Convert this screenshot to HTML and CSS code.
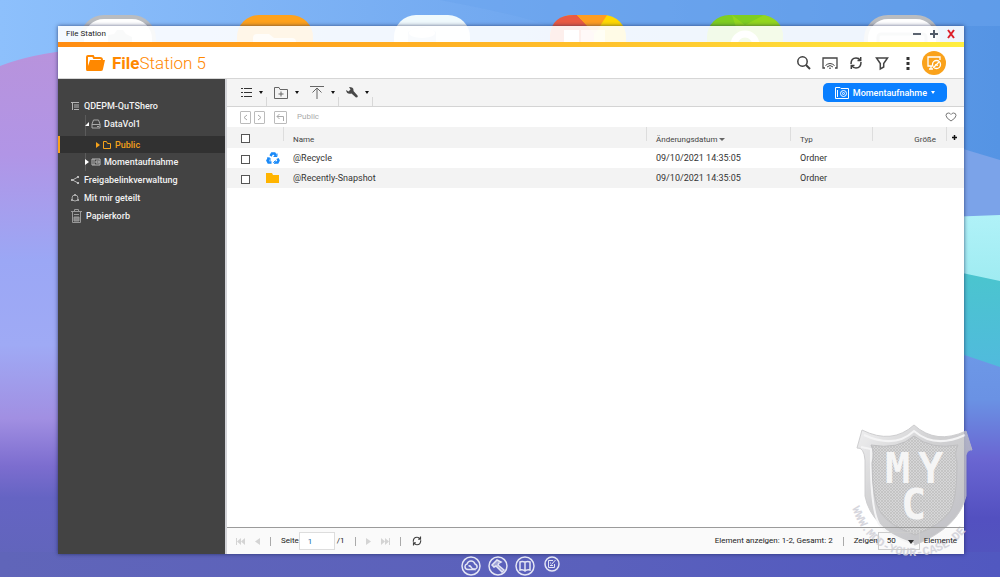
FILE: index.html
```html
<!DOCTYPE html>
<html lang="de">
<head>
<meta charset="utf-8">
<meta name="viewport" content="width=device-width, initial-scale=1">
<title>File Station</title>
<link rel="stylesheet" href="styles.css">
</head>
<body>
<svg class="wallpaper" viewBox="0 0 1000 577" preserveAspectRatio="none" aria-hidden="true">
  <defs>
    <linearGradient id="sky"><stop offset="0" stop-color="#8dc0fc"/><stop offset=".5" stop-color="#72a9f0"/><stop offset="1" stop-color="#5594e4"/></linearGradient>
    <linearGradient id="left" x1="0" y1="0" x2="0" y2="1"><stop offset="0" stop-color="#b893dc"/><stop offset=".2" stop-color="#b195e6"/><stop offset=".4" stop-color="#9ba7f5"/><stop offset=".56" stop-color="#9faaf5"/><stop offset=".7" stop-color="#a18fe2"/><stop offset=".79" stop-color="#7c6dcf"/><stop offset=".85" stop-color="#6564c3"/><stop offset="1" stop-color="#6065b9"/></linearGradient>
    <linearGradient id="right" x1="0" y1="0" x2="0" y2="1"><stop offset="0" stop-color="#6e9ae8"/><stop offset=".25" stop-color="#6a92e4"/><stop offset=".5" stop-color="#6a66d2"/><stop offset=".75" stop-color="#5350c0"/><stop offset="1" stop-color="#5157bd"/></linearGradient>
    <linearGradient id="mint" x1="0" y1="0" x2="0" y2="1"><stop offset="0" stop-color="#b0f2f8"/><stop offset="1" stop-color="#9beaf0"/></linearGradient>
    <linearGradient id="teal" x1="0" y1="0" x2="0" y2="1"><stop offset="0" stop-color="#4ac6cd"/><stop offset="1" stop-color="#52b8e0"/></linearGradient>
    <linearGradient id="floor"><stop offset="0" stop-color="#6065b9"/><stop offset=".6" stop-color="#5a60bc"/><stop offset="1" stop-color="#5158c0"/></linearGradient>
  </defs>
  <rect width="1000" height="577" fill="url(#sky)"/>
  <path d="M440 0Q520 15 550 26H1000V0Z" fill="#6aa4ee" opacity=".5"/>
  <path d="M0 66Q30 54 80 49V577H0Z" fill="url(#left)"/>
  <path d="M920 136L1000 160V577H920Z" fill="#7ba3e9"/>
  <path d="M920 218L1000 215V300H920Z" fill="url(#mint)"/>
  <path d="M920 264L1000 281V390H920Z" fill="url(#teal)"/>
  <path d="M920 340L1000 367V577H920Z" fill="url(#right)"/>
  <rect y="552" width="1000" height="25" fill="url(#floor)"/>
</svg>

<div class="apps" aria-hidden="true">
  <svg viewBox="0 0 76 40"><rect x="2" y="2" width="72" height="60" rx="22" fill="#fff" stroke="#b9bcc0" stroke-width="4"/><path d="M28 26V20l6-1 3-4h6l3 4 6 3v18H24Z" fill="#c3c7cc"/></svg>
  <svg viewBox="0 0 76 40"><rect width="76" height="60" rx="22" fill="#ffa21c"/><path d="M16 40V23q0-4 4-4h12l5 4h18q4 0 4 4v13Z" fill="#fff" opacity=".75"/></svg>
  <svg viewBox="0 0 76 40"><rect width="76" height="60" rx="22" fill="#f0fafd"/><path d="M14 40V17q14-9 28 0v23Z" fill="#bcd3ec"/><ellipse cx="28" cy="18" rx="13" ry="5" fill="#fff"/></svg>
  <svg viewBox="0 0 76 40"><rect width="76" height="60" rx="22" fill="#ffd800"/><path d="M0 40V20Q2 0 24 0h3l17 18v22Z" fill="#ea5a43"/><path d="M27 0h30L45 19Z" fill="#ff9d20"/><rect x="14" y="15" width="15" height="20" fill="#fff"/><rect x="31" y="15" width="24" height="20" fill="#fff" opacity=".6"/></svg>
  <svg viewBox="0 0 76 40"><rect width="76" height="60" rx="22" fill="#7fce21"/><path d="M25 0l13 10L57 0q18 4 19 20v20H38Z" fill="#9bdb1e" opacity=".7"/><circle cx="38" cy="30" r="11" fill="none" stroke="#fff" stroke-width="7"/></svg>
  <svg viewBox="0 0 76 40"><rect x="2" y="2" width="72" height="60" rx="22" fill="#fff" stroke="#b9bcc0" stroke-width="4"/><rect x="14" y="19" width="48" height="30" rx="3" fill="#eef0f4" stroke="#bfc5ce" stroke-width="3"/></svg>
</div>

<main class="window">
  <header class="titlebar">
    <span class="titlebar-name">File Station</span>
    <div class="window-buttons">
      <button type="button" aria-label="Minimieren"><svg width="10" height="10" viewBox="0 0 10 10"><path d="M1 5h8" stroke="#5c6470" stroke-width="2"/></svg></button>
      <button type="button" aria-label="Maximieren"><svg width="10" height="10" viewBox="0 0 10 10"><path d="M1 5h8M5 1v8" stroke="#525b68" stroke-width="2"/></svg></button>
      <button type="button" aria-label="Schließen"><svg width="10" height="10" viewBox="0 0 10 10"><path d="M2 1l6 8M8 1L2 9" stroke="#dc1f2c" stroke-width="2"/></svg></button>
    </div>
  </header>

  <div class="brandbar">
    <svg width="20" height="16" viewBox="0 0 20 16"><path d="M2 14V2q0-1 1-1h5l1 2h6q2 0 2 2v1" fill="none" stroke="#f80" stroke-width="2"/><path d="M5 5h15l-2 9q0 2-2 2H2Q1 16 1 14h1Z" fill="#f80"/></svg>
    <h1 class="brand"><b>File</b>Station 5</h1>
    <div class="brand-actions">
      <button type="button" aria-label="Suchen"><svg width="16" height="16" viewBox="0 0 16 16" fill="none" stroke="#3f3f3f"><circle cx="6.500" cy="6.500" r="4.700" stroke-width="1.500"/><path d="M10 10l4 4" stroke-width="2"/></svg></button>
      <button type="button" aria-label="Streamen"><svg width="16" height="16" viewBox="0 0 16 16" fill="none" stroke="#444"><path d="M3 13H1V3h14v10h-2" stroke-width="1.300"/><path d="M3.500 10.500q4.500-4 9 0M5 12q3-3 6 0M7 13.200h2" stroke-width="1"/></svg></button>
      <button type="button" aria-label="Aktualisieren"><svg width="16" height="16" viewBox="0 0 16 16" fill="none" stroke="#3f3f3f" stroke-width="1.500"><path d="M3 9q0-6 5-6 3 0 4 2M13 7q0 6-5 6-3 0-4-2M12.700 2v3.500H9.500M3.300 14v-3.500h3.200"/></svg></button>
      <button type="button" aria-label="Filter"><svg width="16" height="16" viewBox="0 0 16 16" fill="none" stroke="#444" stroke-width="1.500"><path d="M2.500 3h11L9.700 8.500V12l-3.400 2V8.500Z"/></svg></button>
      <button type="button" aria-label="Mehr"><svg width="16" height="16" viewBox="0 0 16 16" fill="#333"><path d="M6.500 2h3v3h-3zM6.500 7h3v3h-3zM6.500 12h3v3h-3z"/></svg></button>
      <button type="button" class="remote" aria-label="Remote-Bereitstellung"><svg width="16" height="16" viewBox="0 0 16 16" fill="none" stroke="#fff" stroke-width="1.300"><path d="M6 11H2V2h12v3M3 14h4M5 11v3"/><circle cx="10.500" cy="9.500" r="4"/><path d="M8 12l5-5M9 9.500l3 1"/></svg></button>
    </div>
  </div>

  <div class="body">
    <nav class="sidebar" aria-label="Ordner">
      <a href="#" class="node root"><svg width="8" height="8" viewBox="0 0 8 8" fill="none" stroke="#b5b5b5"><path d="M0 .5h8M3 3h5M3 5h5M3 7.500h5M1.500 0v8"/></svg>QDEPM-QuTShero</a>
      <div class="branch">
        <a href="#" class="node child"><svg class="arrow" width="4" height="4" viewBox="0 0 4 4"><path d="M4 0v4H0Z" fill="#fff"/></svg><svg width="10" height="10" viewBox="0 0 10 10" fill="none" stroke="#aaa"><path d="M1 5l1.500-4h5L9 5v4H1ZM1 5.500h8M6 7.500h2"/></svg>DataVol1</a>
        <a href="#" class="node selected" aria-current="true"><svg class="arrow" width="4" height="6" viewBox="0 0 4 6"><path d="M0 0l4 3-4 3Z" fill="#f5a21b"/></svg><svg width="10" height="10" viewBox="0 0 10 10" fill="none" stroke="#f5a21b"><path d="M1.500 1.500h3l1 2h3v5h-7Z"/></svg>Public</a>
        <a href="#" class="node child"><svg class="arrow" width="4" height="6" viewBox="0 0 4 6"><path d="M0 0l4 3-4 3Z" fill="#fff"/></svg><svg width="10" height="10" viewBox="0 0 10 10" fill="none" stroke="#bbb"><path d="M1 2h8v6H1ZM3 2v6M5 4h3v2H5Z"/></svg>Momentaufnahme</a>
      </div>
      <a href="#" class="node root"><svg width="8" height="8" viewBox="0 0 8 8" fill="none" stroke="#bbb"><path d="M7 1L1.500 4 7 7"/><path d="M6 1h2M0 4h2M6 7h2" stroke-width="2"/></svg>Freigabelinkverwaltung</a>
      <a href="#" class="node root"><svg width="8" height="8" viewBox="0 0 8 8" fill="none" stroke="#aaa"><circle cx="4" cy="4" r="3"/><path d="M3 1h2M0 6h2M6 6h2" stroke-width="2"/></svg>Mit mir geteilt</a>
      <a href="#" class="node trash"><svg width="11" height="14" viewBox="0 0 11 14" fill="none" stroke="#999"><path d="M0 2.500h11M3.500 2V.500h4V2M1.500 3v10.500h8V3M3 5.500h5"/><path d="M3 8h5v4H3Z" fill="#888"/></svg>Papierkorb</a>
    </nav>

    <section class="content">
      <div class="toolbar">
        <button type="button" class="tool ruled" aria-label="Ansicht"><svg width="12" height="12" viewBox="0 0 12 12" stroke="#333"><path d="M1 1.500h2M1 5.500h2M1 9.500h2M4 1.500h8M4 5.500h8M4 9.500h8"/></svg><i></i></button>
        <button type="button" class="tool" aria-label="Ordner erstellen"><svg width="14" height="12" viewBox="0 0 14 12" fill="none" stroke="#666"><path d="M.5.5H5l1 2h7.500v9H.5ZM7 4.500v5M4.500 7h5"/></svg><i></i></button>
        <button type="button" class="tool ruled" aria-label="Hochladen"><svg width="14" height="13" viewBox="0 0 14 13" fill="none" stroke="#666"><path d="M0 .5h14M7 13V2M2.500 6.500L7 2l4.500 4.500"/></svg><i></i></button>
        <button type="button" class="tool ruled" aria-label="Werkzeuge"><svg width="12" height="12" viewBox="0 0 12 12"><path d="M3 0q5 0 4.500 4L11.500 8.500q1 2-1.500 2L5.500 6.500Q1 8 0 3l2.500 1.500L4.500 2.500Z" fill="#484848"/></svg><i></i></button>
        <button type="button" class="snapshot"><svg width="14" height="12" viewBox="0 0 14 12" fill="none" stroke="#fff"><path d="M.5 11.500V.5H5l1 1h7.500v10ZM2.500 3v7"/><circle cx="8.500" cy="6.500" r="3"/><circle cx="8.500" cy="6.500" r="1"/></svg>Momentaufnahme<i></i></button>
      </div>

      <div class="crumbs">
        <button type="button" class="step" aria-label="Zurück"><svg width="9" height="11" viewBox="0 0 9 11"><path d="M6 3L3 5.500 6 8"/></svg></button>
        <button type="button" class="step" aria-label="Vor"><svg width="9" height="11" viewBox="0 0 9 11"><path d="M3 3l3 2.500L3 8"/></svg></button>
        <button type="button" class="step up" aria-label="Nach oben"><svg width="11" height="11" viewBox="0 0 11 11"><path d="M8.500 9V4.500H2M4.500 2L2 4.500 4.500 7"/></svg></button>
        <a href="#" class="crumb">Public</a>
        <button type="button" class="favorite" aria-label="Favorit"><svg width="12" height="10" viewBox="0 0 12 10"><path d="M6 9Q1 6 1 3.500 1 1 3.500 1 5 1 6 2.500 7 1 8.500 1 11 1 11 3.500 11 6 6 9Z" fill="none" stroke="#777"/></svg></button>
      </div>

      <div class="files">
        <table>
          <colgroup><col class="c-check"><col class="c-icon"><col><col class="c-date"><col class="c-type"><col class="c-size"><col class="c-add"></colgroup>
          <thead>
            <tr>
              <th><input type="checkbox" aria-label="Alle auswählen"></th><th></th>
              <th class="split">Name</th>
              <th class="split">Änderungsdatum <i></i></th>
              <th class="split">Typ</th>
              <th class="split size">Größe</th>
              <th class="split add"><button type="button" aria-label="Spalten"><svg width="5" height="5" viewBox="0 0 5 5"><path d="M0 2.500h5M2.500 0v5" stroke="#111" stroke-width="1.500"/></svg></button></th>
            </tr>
          </thead>
          <tbody>
            <tr>
              <td><input type="checkbox" aria-label="@Recycle auswählen"></td>
              <td><svg width="14" height="12" viewBox="0 0 14 12" fill="none" stroke="#1989f8" stroke-width="2.500"><path d="M4.500 4L6 1.500h2.500L10 4M11.500 6.500l1 2-1 2H8.500M5.500 10.500h-3l-1-2L3 6"/><path d="M7.500 4.500h3.500V1.500M9.500 8.500L7.500 10.500l2 1.500M1 6h3v3" stroke-width="1"/></svg></td>
              <td>@Recycle</td><td>09/10/2021 14:35:05</td><td>Ordner</td><td></td><td></td>
            </tr>
            <tr>
              <td><input type="checkbox" aria-label="@Recently-Snapshot auswählen"></td>
              <td><svg width="14" height="12" viewBox="0 0 14 12"><path d="M0 1h6l1 2h6v8H0Z" fill="#ffb400"/></svg></td>
              <td>@Recently-Snapshot</td><td>09/10/2021 14:35:05</td><td>Ordner</td><td></td><td></td>
            </tr>
          </tbody>
        </table>
      </div>

      <footer class="pager">
        <button type="button" class="nav" aria-label="Erste Seite"><svg width="9" height="7" viewBox="0 0 9 7"><path d="M0 0h1v7H0ZM5 0v7L1 3.500ZM9 0v7L5 3.500Z"/></svg></button>
        <button type="button" class="nav" aria-label="Vorherige Seite"><svg width="5" height="7" viewBox="0 0 5 7"><path d="M5 0v7L0 3.500Z"/></svg></button>
        <hr>
        <label for="page">Seite</label><input id="page" type="text" value="1"><span class="total">/1</span>
        <hr>
        <button type="button" class="nav" aria-label="Nächste Seite"><svg width="5" height="7" viewBox="0 0 5 7"><path d="M0 0v7l5-3.500Z"/></svg></button>
        <button type="button" class="nav" aria-label="Letzte Seite"><svg width="9" height="7" viewBox="0 0 9 7"><path d="M8 0h1v7H8ZM0 0v7l4-3.500ZM4 0v7l4-3.500Z"/></svg></button>
        <hr>
        <button type="button" aria-label="Neu laden"><svg width="12" height="12" viewBox="0 0 16 16" fill="none" stroke="#3f3f3f" stroke-width="1.500"><path d="M3 9q0-6 5-6 3 0 4 2M13 7q0 6-5 6-3 0-4-2M12.700 2v3.500H9.500M3.300 14v-3.500h3.200"/></svg></button>
        <span class="summary">Element anzeigen: 1-2, Gesamt: 2</span>
        <hr>
        <label for="count">Zeigen</label>
        <span class="select"><select id="count"><option>50</option></select></span>
        <span class="unit">Elemente</span>
      </footer>
    </section>
  </div>
</main>

<div class="dock">
  <button type="button" aria-label="Cloud"><svg width="20" height="20" viewBox="0 0 20 20"><circle cx="10" cy="10" r="9"/><path d="M15 13.500H7q-3 0-3-3 0-2 2-2.500Q7 5 10 5q3 0 4 3 2.500 1 2 3.500-1 2-3 1.500-2 0-3-2-1-1.500-2.500-1"/></svg></button>
  <button type="button" aria-label="Werkzeug"><svg width="20" height="20" viewBox="0 0 20 20"><circle cx="10" cy="10" r="9"/><path d="M4 9l5-5 4 2-2 1-1 2 6 5-2 2-6-6-2 1Z" fill="#e3e5f4" fill-opacity=".5"/></svg></button>
  <button type="button" aria-label="Hilfe"><svg width="20" height="20" viewBox="0 0 20 20"><circle cx="10" cy="10" r="9"/><path d="M10 6v9M10 6Q7 5 5 6v8q3-1 5 1 2-2 5-1V6q-2-1-5 0Z"/></svg></button>
  <button type="button" class="note" aria-label="Notiz"><svg width="16" height="16" viewBox="0 0 16 16"><circle cx="8" cy="8" r="7"/><path d="M9 4.500H4.500v7h6V8M7.500 8.500l4-4.500M6 7h1M6 9.500h3" stroke-width="1"/></svg></button>
</div>

<svg class="badge" width="140" height="140" viewBox="0 0 140 140" role="img" aria-label="MYC">
  <defs>
    <linearGradient id="metal" x1="0" y1="0" x2="1" y2="1"><stop offset="0" stop-color="#ededee"/><stop offset=".4" stop-color="#c7c7c9"/><stop offset="1" stop-color="#b1b1b7"/></linearGradient>
    <pattern id="mesh" width="3" height="3" patternUnits="userSpaceOnUse"><rect width="3" height="3" fill="#d0d0d1"/><path d="M0 0l3 3M3 0L0 3" stroke="#adadae" stroke-width=".6"/></pattern>
    <path id="ring" d="M3 88Q20 136 66 136 112 134 131 86"/>
  </defs>
  <path d="M13 10Q43 25 65 5 87 25 117 11L123 30Q119 29 117 35V76Q110 107 66 125 22 108 16 76V40Q15 27 8 28Z" fill="url(#metal)" stroke="#c4c4c6" opacity=".95"/>
  <path d="M15 15Q46 29 65 11 86 29 116 15M12 27l10 2q-1 58 8 75 8 11 35 20" fill="none" stroke="#f3f3f4" stroke-width="2"/>
  <path d="M22 25Q49 30 65 16 82 30 109 25 105 33 108 42 108 82 100 93 90 106 66 115 41 106 32 93 23 80 23 43 26 33 22 25Z" fill="url(#mesh)" stroke="#b4b4b6"/>
  <g class="badge-letters"><text x="36" y="63">M</text><text x="69" y="63">Y</text><text x="52" y="99">C</text></g>
  <text class="badge-ring"><textPath href="#ring">WWW.MOD-YOUR-CASE.DE</textPath></text>
</svg>
</body>
</html>
```
FILE: styles.css
```css
* { box-sizing: border-box; }

body {
  margin: 0;
  min-height: 100vh;
  display: flex;
  flex-direction: column;
  position: relative;
  overflow: hidden;
  background: #72a9f0;
  color: #333;
  font: 9px/12px Roboto, "Liberation Sans", sans-serif;
}

button {
  display: inline-flex;
  align-items: center;
  justify-content: center;
  padding: 0;
  border: 0;
  background: none;
  color: inherit;
  font: inherit;
}

a { color: inherit; text-decoration: none; }
svg { display: block; flex: none; }

.wallpaper { position: absolute; inset: 0; width: 100%; height: 100%; }

.apps {
  position: absolute;
  top: 15px;
  left: 80px;
  right: 60px;
  display: flex;
  justify-content: space-between;
}
.apps svg { width: 76px; height: 40px; }

.window {
  position: relative;
  flex: 1;
  display: flex;
  flex-direction: column;
  margin: 26px 36px 0 58px;
  box-shadow: 0 0 4px rgba(20, 30, 80, .7);
}

.titlebar {
  display: flex;
  align-items: center;
  height: 16px;
  padding: 0 8px;
  background: rgba(255, 255, 255, .9);
  font-size: 8px;
  color: #222;
}
.window-buttons { display: flex; gap: 7px; margin-left: auto; }

.brandbar {
  display: flex;
  align-items: center;
  gap: 7px;
  height: 37px;
  padding: 5px 18px 0 27px;
  background: linear-gradient(90deg, #ff8c12, #ffc22c 60%, #ffee40) top / 100% 5px no-repeat #fff;
  border-bottom: 1px solid #d6d6d6;
}
.brand { margin: 0; color: #f80; font-size: 17px; line-height: 24px; font-weight: 300; }
.brand b { font-weight: 700; }
.brand-actions { display: flex; align-items: center; gap: 10px; margin-left: auto; }
.remote { width: 24px; height: 24px; margin-left: -4px; border-radius: 50%; background: #faa21b; }

.body { flex: 1; display: flex; }

.sidebar {
  width: 167px;
  padding-top: 18px;
  background: #434343;
  color: #f2f2f2;
  font-weight: 500;
}
.node { display: flex; align-items: center; gap: 3px; height: 18px; }
.root { padding-left: 13px; gap: 5px; }
.branch {
  background: linear-gradient(#5b5b5b, #5b5b5b) 27px 0 / 1px 100% no-repeat;
}
.child { padding-left: 27px; }
.arrow { margin-right: -1px; }
.selected {
  height: 17px;
  margin-top: 3px;
  padding-left: 36px;
  border-left: 2px solid #faa21b;
  background: #313131;
  color: #f5a21b;
}
.trash { padding-left: 13px; gap: 4px; }

.content {
  flex: 1;
  min-width: 0;
  display: flex;
  flex-direction: column;
  border-left: 2px solid #d3d4d8;
  background: linear-gradient(#fafafa, #fafafa) bottom / 100% 27px no-repeat #fff;
}

.toolbar {
  display: flex;
  align-items: center;
  height: 28px;
  padding: 0 17px 0 13px;
  background: #f4f4f4;
  border-bottom: 1px solid #d4d4d4;
}
.tool {
  gap: 7px;
  height: 27px;
  margin-right: 7px;
  padding-right: 4px;
}
.ruled { background: linear-gradient(#d8d8d8, #d8d8d8) right bottom / 1px 9px no-repeat; }
.tool i, .snapshot i, th i {
  border: 2px solid transparent;
  border-top: 3px solid #111;
  border-bottom: 0;
}
.snapshot {
  gap: 4px;
  height: 19px;
  margin-left: auto;
  padding: 0 12px;
  border-radius: 5px;
  background: #0a7fff;
  color: #fff;
  font-weight: 500;
}
.snapshot i { border-top-color: #fff; }

.crumbs { display: flex; align-items: center; height: 20px; padding: 0 7px 0 13px; color: #aaa; font-size: 8px; }
.step { border: 1px solid #bbb; border-radius: 1px; margin-right: 3px; }
.step svg { fill: none; stroke: #aaa; }
.up { margin: 0 10px 0 6px; }
.favorite { margin-left: auto; }

.files { flex: 1; }
table { width: 100%; border-collapse: collapse; table-layout: fixed; }
.c-check { width: 29px; }
.c-icon { width: 27px; }
.c-date { width: 144px; }
.c-type { width: 82px; }
.c-size { width: 74px; }
.c-add { width: 18px; }
th, td { height: 20px; padding: 0 10px; text-align: left; font-weight: 400; white-space: nowrap; }
td { padding-bottom: 1px; }
th:nth-child(2), td:nth-child(2) { padding: 0 0 0 10px; }
th { height: 21px; padding-top: 4px; background: #f3f3f3; font-size: 8px; color: #444; }
.split { background: linear-gradient(#ddd, #ddd) left top / 1px 14px no-repeat #f3f3f3; }
th i { display: inline-block; vertical-align: middle; border-width: 3px 3px 0; border-top-color: #666; }
th.add { padding: 0 0 0 6px; }
.size { text-align: right; }
tbody tr:nth-child(even) { background: #f3f3f3; }
th:first-child, td:first-child { padding: 2px 0 0 14px; }
input[type="checkbox"] {
  appearance: none;
  display: block;
  width: 9px;
  height: 9px;
  margin: 0;
  border: 1px solid #555;
  background: #fff;
}

.pager {
  position: relative;
  z-index: 2;
  display: flex;
  align-items: center;
  gap: 10px;
  height: 27px;
  padding: 0 7px 0 9px;
  border-top: 1px solid #9b9b9b;
  font-size: 8px;
  color: #222;
}
.nav svg { fill: #d4d4d4; }
.pager hr { width: 1px; height: 9px; margin: 0; border: 0; background: #aaa; }
.pager label { margin-right: -10px; }
.pager input {
  width: 36px;
  height: 18px;
  padding: 0 8px;
  border: 1px solid #ddd;
  background: #fff;
  color: #1468a8;
  font: inherit;
}
.total { margin-left: -8px; }
.summary { margin-left: auto; }
.unit { margin-left: -6px; }
.select { position: relative; }
.select::after {
  content: "";
  position: absolute;
  top: 8px;
  right: 6px;
  border: 3px solid transparent;
  border-top: 4px solid #333;
  border-bottom: 0;
}
.select select {
  appearance: none;
  display: block;
  width: 42px;
  height: 18px;
  padding: 0 8px;
  border: 1px solid #ccc;
  border-radius: 0;
  background: none;
  color: #222;
  font: inherit;
}

.dock {
  position: relative;
  display: flex;
  align-items: flex-start;
  justify-content: center;
  gap: 7px;
  height: 23px;
  padding: 2px 0 0 20px;
}
.note { margin-left: 2px; }
.dock svg { fill: none; stroke: #e3e5f4; stroke-width: 1.5px; }

.badge { position: absolute; z-index: 1; right: 11px; bottom: 17px; opacity: .85; pointer-events: none; }
.badge-letters { fill: #f4f4f4; font: bold 42px "DejaVu Sans Mono", monospace; }
.badge-ring { fill: #d0d0d8; font: bold 12px "Liberation Mono", monospace; }
```
